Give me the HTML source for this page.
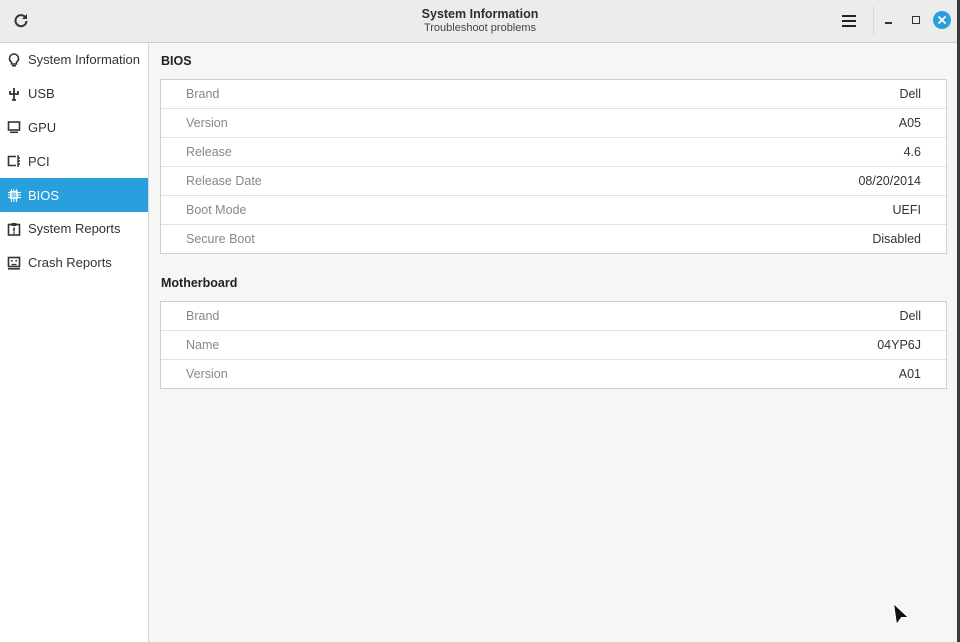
<!DOCTYPE html>
<html><head><meta charset="utf-8"><style>
*{margin:0;padding:0;box-sizing:border-box}
body{width:960px;height:642px;overflow:hidden;font-family:"Liberation Sans","DejaVu Sans",sans-serif;font-size:13px;color:#2e2e2e;background:#f6f6f6;position:relative}
.hdr{position:absolute;left:0;top:0;width:960px;height:43px;background:#ececec;border-bottom:1px solid #cfcfcf}
.title{position:absolute;left:0;width:960px;text-align:center;top:7px;font-weight:bold;font-size:12.5px;color:#2e2e2e}
.sub{position:absolute;left:0;width:960px;text-align:center;top:22px;font-size:11px;color:#444}
.side{position:absolute;left:0;top:43px;width:149px;height:599px;background:#fff;border-right:1px solid #d6d6d6}
.item{height:33.8px;display:flex;align-items:center;padding-left:7px;font-size:13px;color:#333}
.item svg{margin-right:7px}
.item.sel{background:#2a9fde;color:#fff}
.sec{position:absolute;left:161px;font-weight:bold;font-size:12.5px;color:#222}
.tbl{position:absolute;left:160px;width:787px;background:#fff;border:1px solid #cfcfcf}
.row{height:29px;display:flex;justify-content:space-between;align-items:center;padding:0 25px;border-top:1px solid #e2e2e2;color:#888;font-size:12.5px}
.row:first-child{border-top:none}
.row span:last-child{color:#333}
</style></head><body>
<div class="hdr">
<svg style="position:absolute;left:13px;top:12px" width="16" height="16" viewBox="0 0 16 16"><path d="M12.5 5.5A5.5 5.5 0 1 0 13.5 9" fill="none" stroke="#333" stroke-width="2"/><path d="M14 2v5h-5z" fill="#333"/></svg>
<div class="title">System Information</div>
<div class="sub">Troubleshoot problems</div>
<svg style="position:absolute;left:842px;top:14px" width="14" height="13"><rect y="1" width="14" height="2" fill="#222"/><rect y="6" width="14" height="2" fill="#222"/><rect y="11" width="14" height="2" fill="#222"/></svg>
<div style="position:absolute;left:873px;top:6px;width:1px;height:30px;background:#d8d8d8"></div>
<div style="position:absolute;left:885px;top:22px;width:7px;height:1.5px;background:#333"></div>
<div style="position:absolute;left:912px;top:16px;width:8px;height:8px;border:1.5px solid #333"></div>
<svg style="position:absolute;left:933px;top:11px" width="18" height="18"><circle cx="9" cy="9" r="9" fill="#2a9fde"/><path d="M5.5 5.5l7 7M12.5 5.5l-7 7" stroke="#fff" stroke-width="1.8"/></svg>
</div>
<div style="position:absolute;left:957px;top:0;width:3px;height:642px;background:#3a3a3a"></div>
<div class="side">
<div class="item"><svg width="14" height="14" viewBox="0 0 14 14"><path d="M7 1a4.5 4.5 0 0 0-2.5 8.2V11h5V9.2A4.5 4.5 0 0 0 7 1z" fill="none" stroke="#333" stroke-width="1.6"/><rect x="5" y="12" width="4" height="1.5" fill="#333"/></svg>System Information</div>
<div class="item"><svg width="14" height="14" viewBox="0 0 14 14"><path d="M7 1v12M3 4v3h8V4M5 13h4" fill="none" stroke="#333" stroke-width="1.8"/></svg>USB</div>
<div class="item"><svg width="14" height="14" viewBox="0 0 14 14"><rect x="1.5" y="2" width="11" height="8" fill="none" stroke="#333" stroke-width="1.6"/><rect x="3" y="11.5" width="8" height="1.6" fill="#333"/></svg>GPU</div>
<div class="item"><svg width="14" height="14" viewBox="0 0 14 14"><path d="M9 2.5H1.5v9H9" fill="none" stroke="#333" stroke-width="1.6"/><path d="M11 1v12M11 4h2M11 7h2M11 10h2" stroke="#333" stroke-width="1.4"/></svg>PCI</div>
<div class="item sel"><svg width="14" height="14" viewBox="0 0 14 14"><rect x="3" y="3" width="8" height="8" fill="#fff"/><path d="M1 4.5h13M1 7h13M1 9.5h13M4.5 1v13M7 1v13M9.5 1v13" stroke="#fff" stroke-width="1"/><rect x="4.5" y="4.5" width="5" height="5" fill="#8ecbee"/></svg>BIOS</div>
<div class="item"><svg width="14" height="14" viewBox="0 0 14 14"><rect x="1.5" y="2.5" width="11" height="10.5" fill="none" stroke="#333" stroke-width="1.6"/><rect x="4.5" y="1" width="5" height="3" fill="#333"/><rect x="6.2" y="5.5" width="1.6" height="4" fill="#333"/><rect x="6.2" y="10.3" width="1.6" height="1.4" fill="#333"/></svg>System Reports</div>
<div class="item"><svg width="14" height="14" viewBox="0 0 14 14"><rect x="1.5" y="1.5" width="11" height="9" fill="none" stroke="#333" stroke-width="1.6"/><rect x="4" y="4" width="1.6" height="1.6" fill="#333"/><rect x="8.4" y="4" width="1.6" height="1.6" fill="#333"/><path d="M4.5 8.5h5" stroke="#333" stroke-width="1.3"/><rect x="1" y="12" width="12" height="1.6" fill="#333"/></svg>Crash Reports</div>
</div>
<div class="sec" style="top:54px">BIOS</div>
<div class="tbl" style="top:79px">
<div class="row" style="height:28px"><span>Brand</span><span>Dell</span></div>
<div class="row"><span>Version</span><span>A05</span></div>
<div class="row"><span>Release</span><span>4.6</span></div>
<div class="row"><span>Release Date</span><span>08/20/2014</span></div>
<div class="row"><span>Boot Mode</span><span>UEFI</span></div>
<div class="row"><span>Secure Boot</span><span>Disabled</span></div>
</div>
<div class="sec" style="top:276px">Motherboard</div>
<div class="tbl" style="top:301px">
<div class="row" style="height:28px"><span>Brand</span><span>Dell</span></div>
<div class="row"><span>Name</span><span>04YP6J</span></div>
<div class="row"><span>Version</span><span>A01</span></div>
</div>
<svg style="position:absolute;left:892px;top:602px" width="20" height="26"><path d="M1.5 1.5l15 14h-7l-5 7z" fill="#111" stroke="#fff" stroke-width="1"/></svg>
</body></html>
